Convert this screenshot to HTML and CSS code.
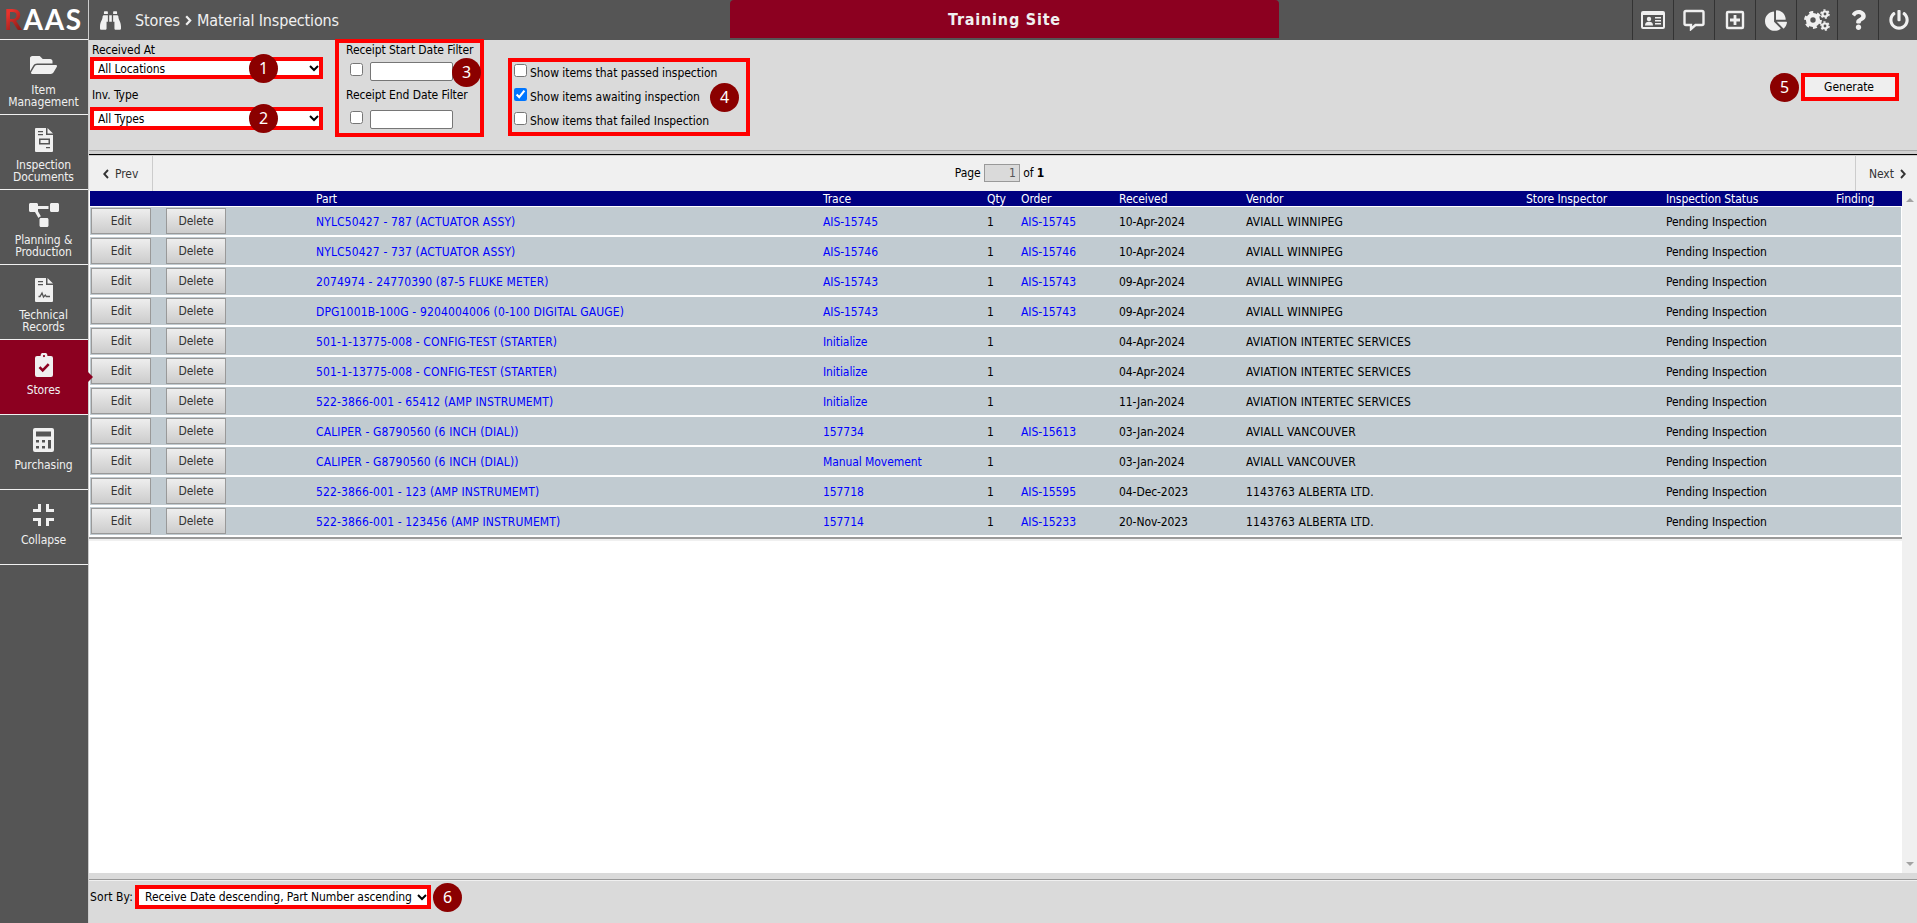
FILE: index.html
```
<!DOCTYPE html>
<html lang="en">
<head>
    <meta charset="UTF-8">
    <meta name="viewport" content="width=device-width, initial-scale=1.0">
    <title>Material Inspections</title>
    <link rel="stylesheet" href="styles.css">
</head>
<body>
    <!-- Left navigation -->
    <nav class="sidebar">
        <div class="logo"><span class="logo-r">R</span>AAS</div>
        <a class="nav-item">
            <svg width="27" height="24" viewBox="0 0 576 512"><path d="M572.694 292.093L500.27 416.248A63.997 63.997 0 0 1 444.989 448H45.025c-18.523 0-30.064-20.093-20.731-36.093l72.424-124.155A64 64 0 0 1 152 256h399.964c18.523 0 30.064 20.093 20.73 36.093zM152 224h328v-48c0-26.51-21.49-48-48-48H272l-64-64H48C21.49 64 0 85.49 0 112v278.046l69.077-118.418C86.214 242.25 117.989 224 152 224z"/></svg>
            <span>Item<br>Management</span>
        </a>
        <a class="nav-item">
            <svg width="18" height="24" viewBox="0 0 18 24"><path fill-rule="evenodd" d="M1 0h10v7h7v16a1 1 0 0 1-1 1H1a1 1 0 0 1-1-1V1a1 1 0 0 1 1-1zM3 3v1.3h5V3zM3 6v1.3h5V6zM4 10.500v6h11v-6zM5.500 12h8v3h-8zM11 19v1.300h4V19zM12.500 0L18 5.500h-5.500z"/></svg>
            <span>Inspection<br>Documents</span>
        </a>
        <a class="nav-item">
            <svg width="30" height="24" viewBox="0 0 640 512"><path d="M384 320H256c-17.670 0-32 14.330-32 32v128c0 17.670 14.330 32 32 32h128c17.670 0 32-14.330 32-32V352c0-17.670-14.330-32-32-32zM192 32c0-17.670-14.330-32-32-32H32C14.330 0 0 14.330 0 32v128c0 17.670 14.330 32 32 32h95.720l73.160 128.040C211.980 300.980 232.400 288 256 288h.28L192 175.510V128h224V64H192V32zM608 0H480c-17.670 0-32 14.330-32 32v128c0 17.670 14.330 32 32 32h128c17.670 0 32-14.330 32-32V32c0-17.670-14.330-32-32-32z"/></svg>
            <span>Planning &amp;<br>Production</span>
        </a>
        <a class="nav-item">
            <svg width="18" height="24" viewBox="0 0 18 24"><path fill-rule="evenodd" d="M1 0h10v7h7v16a1 1 0 0 1-1 1H1a1 1 0 0 1-1-1V1a1 1 0 0 1 1-1zM3 3v1.300h5V3zM3 6v1.300h5V6zM12.500 0L18 5.500h-5.500z"/><path class="cut" d="M3.500 18.500h1.500l2-3.500 1.500 4 1.800-2 1 1.500H15"/></svg>
            <span>Technical<br>Records</span>
        </a>
        <a class="nav-item active">
            <svg width="18" height="24" viewBox="0 0 18 24"><path fill-rule="evenodd" d="M2 3h3.500a3.500 3.500 0 0 1 7 0H16a2 2 0 0 1 2 2v17a2 2 0 0 1-2 2H2a2 2 0 0 1-2-2V5a2 2 0 0 1 2-2zM9 2a1.100 1.100 0 1 0 0 2.200A1.100 1.100 0 0 0 9 2z"/><path class="tick" d="M4.500 14.200l3.200 3.200 6-6.200"/></svg>
            <span>Stores</span>
        </a>
        <a class="nav-item">
            <svg width="21" height="24" viewBox="0 0 21 24"><path fill-rule="evenodd" d="M2 0h17a2 2 0 0 1 2 2v20a2 2 0 0 1-2 2H2a2 2 0 0 1-2-2V2a2 2 0 0 1 2-2zM3 3.500v5h15v-5zM3 12v2.500h3V12zM9 12v2.500h3V12zM3 18v2.500h3V18zM9 18v2.500h3V18zM15 12v8.500h3V12z"/></svg>
            <span>Purchasing</span>
        </a>
        <a class="nav-item">
            <svg width="21" height="22" viewBox="0 0 21 22"><path d="M5 0h3v8H0V5h5zM13 0h3v5h5v3h-8zM0 14h8v8H5v-5H0zM13 14h8v3h-5v5h-3z"/></svg>
            <span>Collapse</span>
        </a>
    </nav>

    <main class="main">
        <header class="topbar">
            <div class="crumbs">
                <svg width="21" height="21" viewBox="0 0 512 512"><path d="M416 48c0-8.840-7.160-16-16-16h-64c-8.840 0-16 7.160-16 16v48h96V48zM63.910 159.990C61.400 253.840 3.460 274.220 0 404v44c0 17.670 14.330 32 32 32h96c17.670 0 32-14.330 32-32V288h32V128H95.840c-17.630 0-31.450 14.370-31.930 31.990zm384.180 0c-.48-17.620-14.300-31.990-31.930-31.990H320v160h32v160c0 17.670 14.330 32 32 32h96c17.670 0 32-14.330 32-32v-44c-3.460-129.780-61.400-150.160-63.910-244.010zM176 32h-64c-8.840 0-16 7.160-16 16v48h96V48c0-8.840-7.160-16-16-16zm48 256h64V128h-64v160z"/></svg>
                <span class="crumb-first">Stores</span>
                <svg class="chev" width="7" height="11" viewBox="0 0 7 11"><path d="M1.200 1.200l4 4.300-4 4.300"/></svg>
                <span class="crumb-last">Material Inspections</span>
            </div>
            <div class="site-name">Training Site</div>
            <div class="tools">
                <a class="tool"><svg width="24" height="20" viewBox="0 0 24 20"><path fill-rule="evenodd" d="M2 1h20a2 2 0 0 1 2 2v14a2 2 0 0 1-2 2H2a2 2 0 0 1-2-2V3a2 2 0 0 1 2-2zM2 5v12h20V5z"/><circle cx="8" cy="9" r="2.200"/><path d="M4 15.500c0-3 1.500-3.800 4-3.800s4 .8 4 3.800zM14 7h6v1.500h-6zM14 10h6v1.500h-6zM14 13h6v1.500h-6z"/></svg></a>
                <a class="tool"><svg class="line" width="22" height="22" viewBox="0 0 22 22"><path d="M3 2h16q1.500 0 1.500 1.500v11q0 1.500-1.500 1.500h-6.500L8 20v-4H3q-1.500 0-1.500-1.500v-11Q1.500 2 3 2z"/></svg></a>
                <a class="tool"><svg class="line" width="20" height="20" viewBox="0 0 20 20"><rect x="2" y="2" width="16" height="16" rx="1"/><path class="plus" d="M10 5v10M5 10h10"/></svg></a>
                <a class="tool"><svg width="22" height="21" viewBox="0 0 544 512"><path d="M527.790 288H290.500l158.030 158.030c6.040 6.040 15.980 6.530 22.190.68 38.700-36.460 65.320-85.610 73.130-140.860 1.340-9.460-6.510-17.850-16.060-17.850zm-15.830-64.800C503.720 103.740 408.260 8.280 288.800.04 279.680-.59 272 7.100 272 16.240V240h223.770c9.140 0 16.820-7.680 16.190-16.800zM224 288V50.710c0-9.550-8.390-17.400-17.840-16.060C86.990 51.490-4.100 155.600.14 280.370 4.500 408.510 114.830 513.590 243.030 511.980c50.400-.63 96.970-16.870 135.260-44.030 7.900-5.600 8.420-17.230 1.570-24.080L224 288z"/></svg></a>
                <a class="tool"><svg class="gears" width="26" height="22" viewBox="0 0 26 22">
                    <circle class="ring-lg" cx="9" cy="11" r="4.900"/><circle class="teeth-lg" cx="9" cy="11" r="7.600"/>
                    <circle class="ring-sm" cx="21" cy="5" r="2.500"/><circle class="teeth-sm" cx="21" cy="5" r="4"/>
                    <circle class="ring-sm" cx="21" cy="17" r="2.500"/><circle class="teeth-sm" cx="21" cy="17" r="4"/>
                </svg></a>
                <a class="tool"><svg width="15" height="20" viewBox="0 0 384 512"><path d="M202.021 0C122.202 0 70.503 32.703 29.914 91.026c-7.363 10.580-5.093 25.086 5.178 32.874l43.138 32.709c10.373 7.865 25.132 6.026 33.253-4.148 25.049-31.381 43.630-49.449 82.757-49.449 30.764 0 68.816 19.799 68.816 49.631 0 22.552-18.617 34.134-48.993 51.164-35.423 19.860-82.299 44.576-82.299 106.405V320c0 13.255 10.745 24 24 24h72.471c13.255 0 24-10.745 24-24v-5.773c0-42.860 125.268-44.645 125.268-160.627C377.504 66.256 286.902 0 202.021 0zM192 373.459c-38.196 0-69.271 31.075-69.271 69.271 0 38.195 31.075 69.270 69.271 69.270s69.271-31.075 69.271-69.271-31.075-69.270-69.271-69.270z"/></svg></a>
                <a class="tool"><svg width="20" height="20" viewBox="0 0 512 512"><path d="M400 54.100c63 45 104 118.600 104 201.900 0 136.800-110.800 247.700-247.500 248C120 504.300 8.200 393 8 256.400 7.900 173.100 48.900 99.300 111.800 54.200c11.700-8.300 28-4.800 35 7.700L162.600 90c5.900 10.500 3.100 23.800-6.600 31-41.500 30.800-68 79.600-68 134.900-.1 92.300 74.500 168.100 168 168.100 91.600 0 168.600-74.200 168-169.100-.3-51.800-24.700-101.800-68.100-134-9.700-7.200-12.400-20.500-6.500-30.900l15.800-28.100c7-12.400 23.200-16.100 34.800-7.800zM296 264V24c0-13.300-10.700-24-24-24h-32c-13.300 0-24 10.700-24 24v240c0 13.300 10.700 24 24 24h32c13.300 0 24-10.700 24-24z"/></svg></a>
            </div>
        </header>

        <!-- Filters -->
        <section class="filters">
            <div class="filter-selects">
                <label for="location">Received At</label>
                <select id="location"><option>All Locations</option></select>
                <label for="inv-type" class="second">Inv. Type</label>
                <select id="inv-type"><option>All Types</option></select>
            </div>
            <div class="filter-dates">
                <label for="start-date">Receipt Start Date Filter</label>
                <div class="date-row"><input type="checkbox"><input type="text" id="start-date"></div>
                <label for="end-date" class="second">Receipt End Date Filter</label>
                <div class="date-row"><input type="checkbox"><input type="text" id="end-date"></div>
            </div>
            <div class="filter-checks">
                <label><input type="checkbox"><span>Show items that passed inspection</span></label>
                <label><input type="checkbox" checked><span>Show items awaiting inspection</span></label>
                <label><input type="checkbox"><span>Show items that failed Inspection</span></label>
            </div>
            <button class="generate">Generate</button>
        </section>
        <div class="divider"></div>

        <!-- Paging -->
        <div class="pager">
            <a class="prev"><svg class="chev" width="6" height="10" viewBox="0 0 6 10"><path d="M5 1L1.200 5 5 9"/></svg>Prev</a>
            <div class="page">Page <input type="text" value="1" disabled> of <b>1</b></div>
            <a class="next">Next<svg class="chev" width="6" height="10" viewBox="0 0 6 10"><path d="M1 1l3.800 4L1 9"/></svg></a>
        </div>

        <div class="results">
            <div class="table-wrap">
                <table>
                    <colgroup>
                        <col class="c-edit"><col class="c-delete"><col class="c-part"><col class="c-trace"><col class="c-qty"><col class="c-order"><col class="c-received"><col class="c-vendor"><col class="c-inspector"><col class="c-status"><col>
                    </colgroup>
                    <thead>
                        <tr><th></th><th></th><th>Part</th><th>Trace</th><th>Qty</th><th>Order</th><th>Received</th><th>Vendor</th><th>Store Inspector</th><th>Inspection Status</th><th>Finding</th></tr>
                    </thead>
                    <tbody>
                        <tr><td><button>Edit</button></td><td><button>Delete</button></td><td><a>NYLC50427 - 787 (ACTUATOR ASSY)</a></td><td><a>AIS-15745</a></td><td>1</td><td><a>AIS-15745</a></td><td>10-Apr-2024</td><td>AVIALL WINNIPEG</td><td></td><td>Pending Inspection</td><td></td></tr>
                        <tr><td><button>Edit</button></td><td><button>Delete</button></td><td><a>NYLC50427 - 737 (ACTUATOR ASSY)</a></td><td><a>AIS-15746</a></td><td>1</td><td><a>AIS-15746</a></td><td>10-Apr-2024</td><td>AVIALL WINNIPEG</td><td></td><td>Pending Inspection</td><td></td></tr>
                        <tr><td><button>Edit</button></td><td><button>Delete</button></td><td><a>2074974 - 24770390 (87-5 FLUKE METER)</a></td><td><a>AIS-15743</a></td><td>1</td><td><a>AIS-15743</a></td><td>09-Apr-2024</td><td>AVIALL WINNIPEG</td><td></td><td>Pending Inspection</td><td></td></tr>
                        <tr><td><button>Edit</button></td><td><button>Delete</button></td><td><a>DPG1001B-100G - 9204004006 (0-100 DIGITAL GAUGE)</a></td><td><a>AIS-15743</a></td><td>1</td><td><a>AIS-15743</a></td><td>09-Apr-2024</td><td>AVIALL WINNIPEG</td><td></td><td>Pending Inspection</td><td></td></tr>
                        <tr><td><button>Edit</button></td><td><button>Delete</button></td><td><a>501-1-13775-008 - CONFIG-TEST (STARTER)</a></td><td><a>Initialize</a></td><td>1</td><td></td><td>04-Apr-2024</td><td>AVIATION INTERTEC SERVICES</td><td></td><td>Pending Inspection</td><td></td></tr>
                        <tr><td><button>Edit</button></td><td><button>Delete</button></td><td><a>501-1-13775-008 - CONFIG-TEST (STARTER)</a></td><td><a>Initialize</a></td><td>1</td><td></td><td>04-Apr-2024</td><td>AVIATION INTERTEC SERVICES</td><td></td><td>Pending Inspection</td><td></td></tr>
                        <tr><td><button>Edit</button></td><td><button>Delete</button></td><td><a>522-3866-001 - 65412 (AMP INSTRUMEMT)</a></td><td><a>Initialize</a></td><td>1</td><td></td><td>11-Jan-2024</td><td>AVIATION INTERTEC SERVICES</td><td></td><td>Pending Inspection</td><td></td></tr>
                        <tr><td><button>Edit</button></td><td><button>Delete</button></td><td><a>CALIPER - G8790560 (6 INCH (DIAL))</a></td><td><a>157734</a></td><td>1</td><td><a>AIS-15613</a></td><td>03-Jan-2024</td><td>AVIALL VANCOUVER</td><td></td><td>Pending Inspection</td><td></td></tr>
                        <tr><td><button>Edit</button></td><td><button>Delete</button></td><td><a>CALIPER - G8790560 (6 INCH (DIAL))</a></td><td><a>Manual Movement</a></td><td>1</td><td></td><td>03-Jan-2024</td><td>AVIALL VANCOUVER</td><td></td><td>Pending Inspection</td><td></td></tr>
                        <tr><td><button>Edit</button></td><td><button>Delete</button></td><td><a>522-3866-001 - 123 (AMP INSTRUMEMT)</a></td><td><a>157718</a></td><td>1</td><td><a>AIS-15595</a></td><td>04-Dec-2023</td><td>1143763 ALBERTA LTD.</td><td></td><td>Pending Inspection</td><td></td></tr>
                        <tr><td><button>Edit</button></td><td><button>Delete</button></td><td><a>522-3866-001 - 123456 (AMP INSTRUMEMT)</a></td><td><a>157714</a></td><td>1</td><td><a>AIS-15233</a></td><td>20-Nov-2023</td><td>1143763 ALBERTA LTD.</td><td></td><td>Pending Inspection</td><td></td></tr>
                    </tbody>
                </table>
                <div class="table-end"></div>
            </div>
            <div class="scrollbar"><i class="up"></i><i class="down"></i></div>
        </div>

        <footer class="footer">
            <label for="sort">Sort By:</label>
            <select id="sort"><option>Receive Date descending, Part Number ascending</option></select>
        </footer>
    </main>

    <!-- Numbered callouts -->
    <div class="box box-1"></div><div class="num num-1">1</div>
    <div class="box box-2"></div><div class="num num-2">2</div>
    <div class="box box-3"></div><div class="num num-3">3</div>
    <div class="box box-4"></div><div class="num num-4">4</div>
    <div class="box box-5"></div><div class="num num-5">5</div>
    <div class="box box-6"></div><div class="num num-6">6</div>
</body>
</html>
```
FILE: styles.css
```
* {
    box-sizing: border-box;
}

body {
    position: relative;
    display: flex;
    margin: 0;
    height: 100vh;
    overflow: hidden;
    background: #fff;
    color: #000;
    font-family: Tahoma, "DejaVu Sans Condensed", "DejaVu Sans", sans-serif;
    font-stretch: condensed;
    font-size: 12px;
    letter-spacing: -0.08px;
}

button, input, select {
    font: inherit;
    letter-spacing: inherit;
    margin: 0;
}

svg {
    display: block;
    fill: #f0f0f0;
}

/* Sidebar */
.sidebar {
    width: 89px;
    flex: none;
    background: #555;
    border-right: 1px solid #ccc;
    color: #f0f0f0;
}

.logo {
    height: 40px;
    padding-left: 4px;
    border-bottom: 1px solid #f0f0f0;
    font: bold 28px/39px Lato, sans-serif;
    letter-spacing: 1.6px;
    color: #fff;
}

.logo-r {
    background: linear-gradient(135deg, #e8322c 30%, #8c1c18 80%);
    -webkit-background-clip: text;
    color: transparent;
}

.nav-item {
    position: relative;
    display: flex;
    flex-direction: column;
    align-items: center;
    height: 75px;
    padding: 13px 1px 0 0;
    border-bottom: 1px solid #f0f0f0;
    line-height: 12px;
    text-align: center;
}

.nav-item svg {
    height: 24px;
    margin-bottom: 7px;
}

.nav-item .cut {
    fill: none;
    stroke: #555;
    stroke-width: 1.3;
}

.nav-item .tick {
    fill: none;
    stroke: #8c0020;
    stroke-width: 2.6;
}

.active {
    background: #8c0020;
}

.active::after {
    content: "";
    position: absolute;
    left: 88px;
    top: 32px;
    border: 5px solid transparent;
    border-left-color: #8c0020;
    border-right: 0;
}

.main {
    flex: 1;
    min-width: 0;
    display: flex;
    flex-direction: column;
}

/* Top bar */
.topbar {
    display: flex;
    flex: none;
    height: 40px;
    background: #555;
    color: #f0f0f0;
}

.crumbs {
    display: flex;
    align-items: center;
    width: 641px;
    padding-left: 11px;
    font-size: 16px;
}

.crumb-first {
    margin: 0 5px 0 14px;
}

.crumb-last {
    margin-left: 5px;
    letter-spacing: -0.15px;
}

.chev path {
    fill: none;
    stroke: #333;
    stroke-width: 1.9;
}

.crumbs .chev path {
    stroke: #f0f0f0;
    stroke-width: 2.2;
}

.site-name {
    width: 549px;
    height: 38px;
    border-radius: 4px 4px 0 0;
    background: #8c0020;
    font-size: 16px;
    font-weight: bold;
    letter-spacing: 0.8px;
    line-height: 40px;
    text-align: center;
}

.tools {
    display: flex;
    margin-left: auto;
    margin-right: -2px;
}

.tool {
    display: flex;
    align-items: center;
    justify-content: center;
    width: 41px;
    border-left: 1px solid #333;
}

.line {
    fill: none;
    stroke: #f0f0f0;
    stroke-width: 2.4;
}

.plus {
    stroke-width: 2.8;
}

.gears {
    fill: none;
    stroke: #f0f0f0;
}

.ring-lg {
    stroke-width: 4.4;
}

.teeth-lg {
    stroke-width: 2.6;
    stroke-dasharray: 3.97 3.99;
}

.ring-sm {
    stroke-width: 2.2;
}

.teeth-sm {
    stroke-width: 1.6;
    stroke-dasharray: 2.1 2.09;
}

/* Filters */
.filters {
    display: flex;
    flex: none;
    height: 110px;
    padding-left: 2px;
    background: #dadada;
}

.filters label {
    display: block;
    height: 19px;
    line-height: 21px;
}

.filter-selects {
    width: 255px;
}

.filter-selects label {
    padding-left: 1px;
}

.filter-selects select {
    display: block;
    width: 232px;
    height: 19px;
    border: 1px solid #767676;
    background: #fff;
    padding: 0 0 0 2px;
}

.filters .second {
    margin-top: 7px;
    height: 24px;
}

.filter-dates {
    width: 168px;
}

.date-row {
    display: flex;
    align-items: flex-start;
    height: 19px;
    margin: 3px 0 0 4px;
}

.date-row input[type="text"] {
    width: 83px;
    height: 19px;
    margin-left: 7px;
    border: 1px solid #767676;
    border-radius: 2px;
    background: #fff;
}

.date-row input[type="checkbox"] {
    width: 13px;
    height: 13px;
    margin-top: 1px;
}

.filter-dates .second {
    margin-top: 4px;
    height: 22px;
}

.filter-checks {
    padding-top: 24px;
    letter-spacing: -0.04px;
}

.filters .filter-checks label {
    display: flex;
    height: 24px;
    line-height: 19px;
}

.filter-checks input {
    width: 13px;
    height: 13px;
    margin-right: 3px;
}

.generate {
    width: 94px;
    height: 22px;
    margin: 36px 20px 0 auto;
    padding: 0 2px 0 0;
    border: 1px solid #767676;
    background: #efefef;
}

.divider {
    flex: none;
    height: 6px;
    border-top: 1px solid #aaa;
    background: linear-gradient(#d0d0d0 3px, #000 3px, #000 4px, #ccc 4px);
}

/* Paging */
.pager {
    display: flex;
    flex: none;
    justify-content: space-between;
    height: 35px;
    background: #f0f0f0;
    line-height: 34px;
}

.prev, .next {
    display: flex;
    align-items: center;
    color: #333;
}

.prev {
    gap: 6px;
    width: 64px;
    padding-left: 14px;
    border-right: 1px solid #ccc;
}

.next {
    gap: 6px;
    width: 62px;
    padding-left: 13px;
    border-left: 1px solid #ccc;
}

.page {
    padding-right: 9px;
}

.page input {
    width: 36px;
    height: 18px;
    padding: 0 3px;
    border: 1px solid #999;
    background: #dadada;
    color: #555;
    text-align: right;
}

/* Results */
.results {
    display: flex;
    flex: 1;
    min-height: 0;
}

.table-wrap {
    flex: 1;
}

table {
    width: 1812px;
    margin-left: 1px;
    table-layout: fixed;
    border-spacing: 0;
}

.table-end {
    height: 5px;
    border-top: 1px solid #fff;
    background: linear-gradient(#999 2px, #f0f0f0 2px);
}

th {
    height: 15px;
    padding: 1px 0 0;
    background: #000080;
    color: #fff;
    font-weight: normal;
    line-height: 14px;
    text-align: left;
}

td {
    height: 30px;
    padding: 2px 0 0;
    border-top: 1px solid #fff;
    border-bottom: 1px solid #fff;
    background: #c1cbd1;
    line-height: 14px;
    white-space: nowrap;
}

td a {
    color: #00f;
}

td:nth-child(-n+2) {
    padding: 1px 0;
}

td:first-child {
    padding-left: 1px;
}

td:nth-child(3),
td:nth-child(8) {
    letter-spacing: 0.14px;
}

td:last-child {
    border-right: 1px solid #fff;
}

td button {
    display: block;
    width: 60px;
    height: 26px;
    padding: 0;
    border: 1px solid #999;
    background: linear-gradient(#eee, #ccc);
    color: #333;
}

.c-edit { width: 76px; }
.c-delete { width: 150px; }
.c-part { width: 507px; }
.c-trace { width: 164px; }
.c-qty { width: 34px; }
.c-order { width: 98px; }
.c-received { width: 127px; }
.c-vendor { width: 280px; }
.c-inspector { width: 140px; }
.c-status { width: 170px; }

.scrollbar {
    display: flex;
    flex-direction: column;
    justify-content: space-between;
    align-items: center;
    width: 15px;
    padding: 7px 0;
    background: #f0f0f0;
}

.up, .down {
    border: 4px solid transparent;
}

.up {
    border-top: 0;
    border-bottom-color: #a3a3a3;
}

.down {
    border-bottom: 0;
    border-top-color: #a3a3a3;
}

/* Footer */
.footer {
    display: flex;
    flex: none;
    height: 50px;
    padding: 15px 0 0 1px;
    background: linear-gradient(#dadada 6px, #999 6px, #999 7px, #f0f0f0 7px, #f0f0f0 8px, #dadada 8px);
    line-height: 19px;
}

.footer label {
    width: 44px;
    letter-spacing: 0.1px;
}

.footer select {
    width: 294px;
    height: 18px;
    margin-left: 3px;
    border: 1px solid #767676;
    background: #fff;
    padding: 0 0 0 3px;
}

/* Callouts sit over the page */
.box {
    position: absolute;
    border: 4px solid #f00;
}

.box-1 { left: 90px; top: 57px; width: 233px; height: 22px; }
.box-2 { left: 90px; top: 107px; width: 233px; height: 23px; }
.box-3 { left: 335px; top: 39px; width: 149px; height: 98px; }
.box-4 { left: 508px; top: 58px; width: 242px; height: 78px; }
.box-5 { left: 1801px; top: 73px; width: 98px; height: 28px; }
.box-6 { left: 135px; top: 885px; width: 296px; height: 24px; }

.num {
    position: absolute;
    width: 29px;
    height: 29px;
    border-radius: 50%;
    background: #8b0000;
    color: #fff;
    font: 16px/28px "Noto Sans", sans-serif;
    text-align: center;
}

.num-1 { left: 249px; top: 54px; }
.num-2 { left: 249px; top: 104px; }
.num-3 { left: 452px; top: 58px; }
.num-4 { left: 710px; top: 83px; }
.num-5 { left: 1770px; top: 73px; }
.num-6 { left: 433px; top: 883px; }
```
